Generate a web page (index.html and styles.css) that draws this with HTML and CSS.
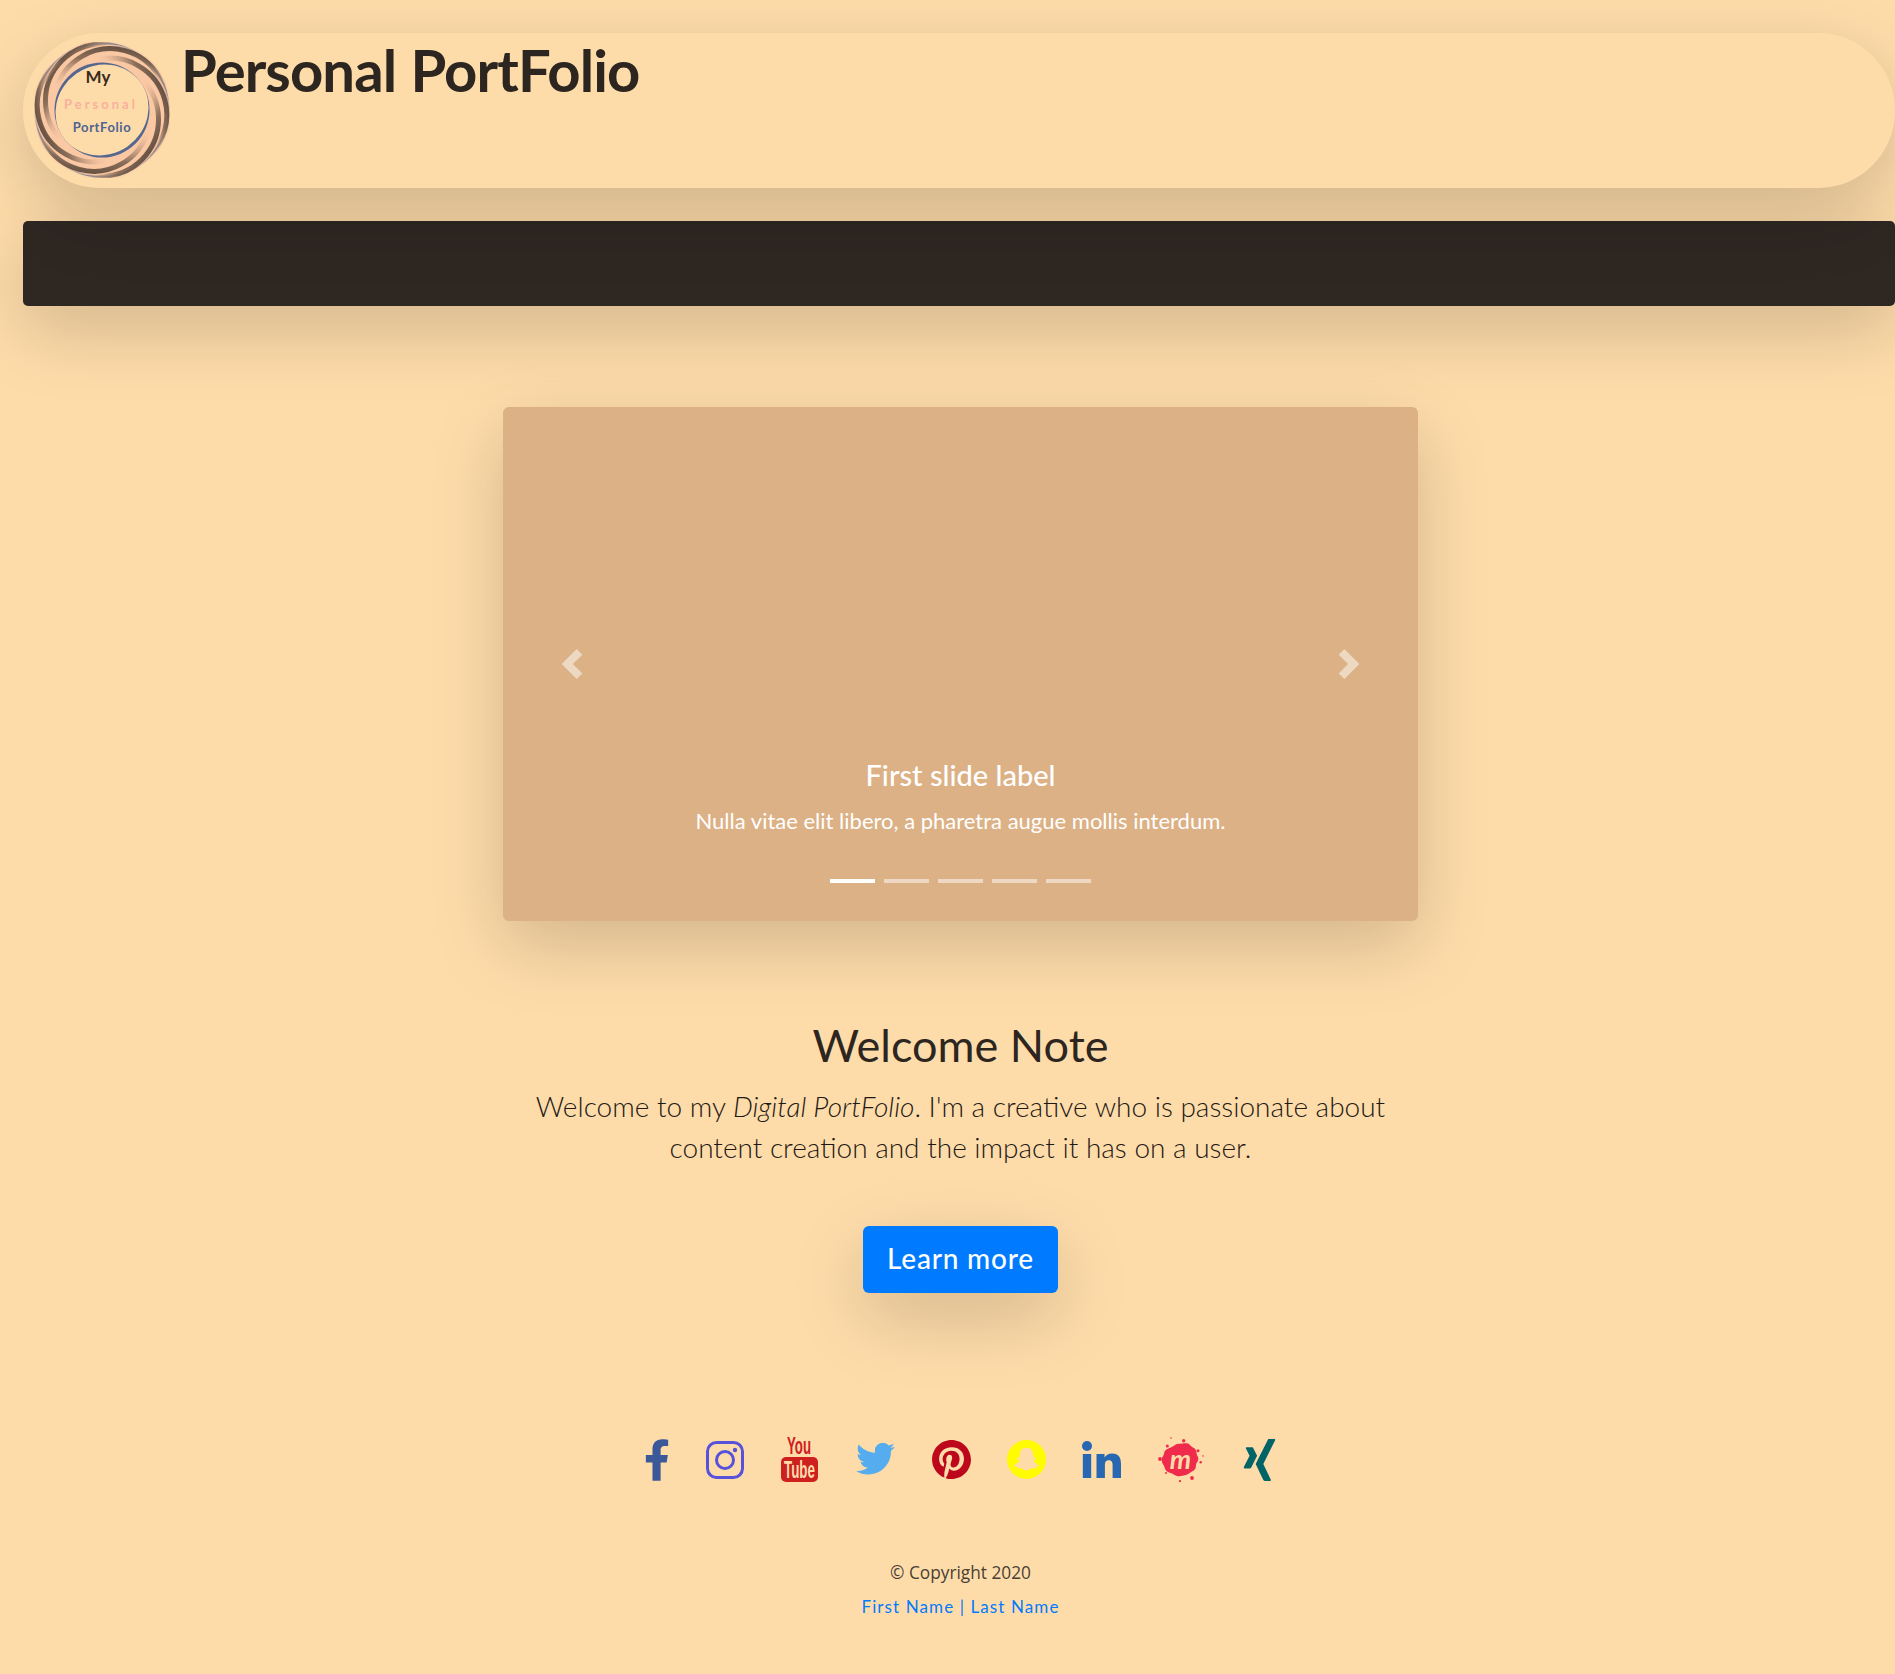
FILE: index.html
```html
<!DOCTYPE html>
<html lang="en">
<head>
<meta charset="utf-8">
<title>Personal PortFolio</title>
<link rel="stylesheet" href="styles.css">
</head>
<body>
<div class="page">
  <header class="masthead">
    <svg class="logo" viewBox="0 0 136 136" width="136" height="136" aria-label="logo">
      <defs>
        <linearGradient id="sh" x1="0" y1="0" x2="1" y2=".7">
          <stop offset="0" stop-color="#2f241c" stop-opacity="1"/>
          <stop offset=".25" stop-color="#6f5847" stop-opacity=".8"/>
          <stop offset=".5" stop-color="#fbc8a4" stop-opacity="0"/>
        </linearGradient>
        <linearGradient id="sh2" x1="0" y1="0" x2="1" y2=".7">
          <stop offset="0" stop-color="#fbc8a4" stop-opacity="1"/>
          <stop offset=".5" stop-color="#fbc8a4" stop-opacity="0"/>
        </linearGradient>
        <circle id="band" cx="68" cy="58.500" r="56.500" fill="none"/>
      </defs>
      <circle cx="68" cy="68" r="66.500" fill="#fbc8a4" stroke="#55678f" stroke-width="1.800"/>
      <g class="blades">
        <g transform="rotate(0 68 68)"><use href="#band" stroke="url(#sh2)" stroke-width="8"/><use href="#band" stroke="url(#sh)" stroke-width="5"/></g>
        <g transform="rotate(60 68 68)"><use href="#band" stroke="url(#sh2)" stroke-width="8"/><use href="#band" stroke="url(#sh)" stroke-width="5"/></g>
        <g transform="rotate(120 68 68)"><use href="#band" stroke="url(#sh2)" stroke-width="8"/><use href="#band" stroke="url(#sh)" stroke-width="5"/></g>
        <g transform="rotate(180 68 68)"><use href="#band" stroke="url(#sh2)" stroke-width="8"/><use href="#band" stroke="url(#sh)" stroke-width="5"/></g>
        <g transform="rotate(240 68 68)"><use href="#band" stroke="url(#sh2)" stroke-width="8"/><use href="#band" stroke="url(#sh)" stroke-width="5"/></g>
        <g transform="rotate(300 68 68)"><use href="#band" stroke="url(#sh2)" stroke-width="8"/><use href="#band" stroke="url(#sh)" stroke-width="5"/></g>
      </g>
      <circle cx="68" cy="68" r="47.500" fill="#55678f"/>
      <ellipse cx="68" cy="68" rx="47.500" ry="44.500" transform="rotate(-35 68 68)" fill="#fedcaa"/>
      <text class="logo-my" x="64" y="41" text-anchor="middle">My</text>
      <text class="logo-pe" x="67" y="67" text-anchor="middle">Personal</text>
      <text class="logo-pf" x="68" y="90" text-anchor="middle">PortFolio</text>
    </svg>
    <h1 class="site-title">Personal PortFolio</h1>
  </header>
  <nav class="navbar"></nav>

  <main class="content">
    <section class="carousel">
      <svg class="chev chev-left" viewBox="0 0 8 8" width="30" height="30"><path d="M5.25 0l-4 4 4 4 1.5-1.5-2.5-2.5 2.5-2.5-1.5-1.5z"/></svg>
      <svg class="chev chev-right" viewBox="0 0 8 8" width="30" height="30"><path d="M2.75 0l-1.5 1.5 2.5 2.5-2.5 2.5 1.5 1.5 4-4-4-4z"/></svg>
      <div class="caption">
        <h5 class="caption-title">First slide label</h5>
        <p class="caption-text">Nulla vitae elit libero, a pharetra augue mollis interdum.</p>
      </div>
      <ol class="indicators">
        <li class="dot dot-active"></li><li class="dot"></li><li class="dot"></li><li class="dot"></li><li class="dot"></li>
      </ol>
    </section>

    <section class="welcome">
      <h2 class="welcome-title">Welcome Note</h2>
      <p class="welcome-text">Welcome to my <em>Digital PortFolio</em>. I'm a creative who is passionate about<br>content creation and the impact it has on a user.</p>
      <a class="btn" href="#">Learn more</a>
    </section>

    <section class="social">
      <svg class="ic ic-fb" viewBox="0 0 320 512" width="26" height="42"><path fill="#3b5998" d="M279.14 288l14.22-92.66h-88.91v-60.13c0-25.35 12.42-50.06 52.24-50.06h40.42V6.26S260.43 0 225.36 0c-73.22 0-121.08 44.38-121.08 124.72v70.62H22.89V288h81.39v224h100.17V288z"/></svg>
      <svg class="ic ic-ig" viewBox="0 0 38 38" width="38" height="38"><g fill="none" stroke="#5851db" stroke-width="3"><rect x="1.500" y="1.500" width="35" height="35" rx="9"/><circle cx="19" cy="19" r="8.500"/></g><circle cx="29" cy="9" r="2.200" fill="#5851db"/></svg>
      <svg class="ic ic-yt" viewBox="0 0 37 45" width="37" height="45">
        <text class="yt-you" x="18" y="17" text-anchor="middle" textLength="24" lengthAdjust="spacingAndGlyphs">You</text>
        <rect x="0" y="20" width="37" height="25" rx="5" fill="#cd201f"/>
        <text class="yt-tube" x="18.500" y="41" text-anchor="middle" textLength="31" lengthAdjust="spacingAndGlyphs">Tube</text>
      </svg>
      <svg class="ic ic-tw" viewBox="0 0 24 20.400" width="39" height="33"><path fill="#55acee" transform="translate(0 -2.300)" d="M23.953 4.57a10 10 0 01-2.825.775 4.958 4.958 0 002.163-2.723c-.951.555-2.005.959-3.127 1.184a4.92 4.92 0 00-8.384 4.482C7.69 8.095 4.067 6.13 1.64 3.162a4.822 4.822 0 00-.666 2.475c0 1.71.87 3.213 2.188 4.096a4.904 4.904 0 01-2.228-.616v.06a4.923 4.923 0 003.946 4.827 4.996 4.996 0 01-2.212.085 4.936 4.936 0 004.604 3.417 9.867 9.867 0 01-6.102 2.105c-.39 0-.779-.023-1.17-.067a13.995 13.995 0 007.557 2.209c9.053 0 13.998-7.496 13.998-13.985 0-.21 0-.42-.015-.63A9.935 9.935 0 0024 4.59z"/></svg>
      <svg class="ic ic-pi" viewBox="0 0 24 24" width="39" height="39"><path fill="#bd081c" d="M12.017 0C5.396 0 .029 5.367.029 11.987c0 5.079 3.158 9.417 7.618 11.162-.105-.949-.199-2.403.041-3.439.219-.937 1.406-5.957 1.406-5.957s-.359-.72-.359-1.781c0-1.663.967-2.911 2.168-2.911 1.024 0 1.518.769 1.518 1.688 0 1.029-.653 2.567-.992 3.992-.285 1.193.6 2.165 1.775 2.165 2.128 0 3.768-2.245 3.768-5.487 0-2.861-2.063-4.869-5.008-4.869-3.41 0-5.409 2.562-5.409 5.199 0 1.033.394 2.143.889 2.741.099.12.112.225.085.345-.09.375-.293 1.199-.334 1.363-.053.225-.172.271-.401.165-1.495-.69-2.433-2.878-2.433-4.646 0-3.776 2.748-7.252 7.92-7.252 4.158 0 7.392 2.967 7.392 6.923 0 4.135-2.607 7.462-6.233 7.462-1.214 0-2.354-.629-2.758-1.379l-.749 2.848c-.269 1.045-1.004 2.352-1.498 3.146 1.123.345 2.306.535 3.55.535 6.607 0 11.985-5.365 11.985-11.987C23.97 5.39 18.592.026 11.985.026L12.017 0z"/></svg>
      <svg class="ic ic-sc" viewBox="0 0 40 40" width="39" height="39"><circle cx="20" cy="20" r="20" fill="#fffc00"/><path fill="#fedcaa" d="M20 8c4.600 0 7 3.400 7 7v3.200l2.400-.4c.8 0 1 .9.3 1.300l-2.400 1.200c.7 2.600 2.600 4.500 5 5.400.6.3.4 1-.2 1.200l-2.600.7-.5 1.700-2.800-.2c-1.900 0-3 2.100-6.200 2.100s-4.300-2.100-6.200-2.100l-2.800.2-.5-1.700-2.600-.7c-.6-.2-.8-.9-.2-1.200 2.400-.9 4.300-2.800 5-5.400l-2.400-1.200c-.7-.4-.5-1.300.3-1.300l2.400.4V15c0-3.600 2.400-7 7-7z"/></svg>
      <svg class="ic ic-li" viewBox="0 0 39 37" width="39" height="37"><g fill="#2867b2"><circle cx="5" cy="5" r="5"/><rect x=".8" y="13" width="8.400" height="24"/><path d="M14.500 13h8v3.400c1.200-2.200 3.900-4 7.500-4 7 0 9 4.500 9 10.600V37h-8.400V24.600c0-3-.6-5.400-3.800-5.400-3.300 0-3.900 2.500-3.900 5.200V37h-8.400z"/></g></svg>
      <svg class="ic ic-me" viewBox="0 0 46 45" width="46" height="45">
        <path fill="#f02a4a" transform="translate(22.300 24.300) scale(1.180 1.060) translate(-24.250 -22.500)" d="M23 6c3 0 4.500-1 7-.5 2.500.6 3 3 5 4 2.300 1.200 3 3.200 3 5.500 0 2 2 3.500 1.500 6-.4 2-2 3-2 5.500s-.8 4.500-3 5.500c-2 1-3 3-5.500 3.500-3 .6-4.500 1.500-7 1-2.500-.6-3.500-2-6-3-2.500-1-4.500-2-5-5-.4-2.500-2.500-4-2.500-7s1.800-4 2-6.500c.2-2.500 2-4 4.500-5C17.500 9.500 20 6 23 6z"/>
        <g fill="#f02a4a"><circle cx="9.300" cy="9" r="1.500"/><circle cx="25.700" cy="3.700" r="1.700"/><circle cx="13" cy="1" r=".8"/><circle cx="40" cy="13.700" r="1.500"/><circle cx="45" cy="19" r=".8"/><circle cx="42.700" cy="25.300" r="1.200"/><circle cx="2" cy="22" r="1.900"/><circle cx="8" cy="36" r="1"/><circle cx="34" cy="41" r="1.900"/><circle cx="22" cy="44" r="1.100"/></g>
        <text class="me-m" x="22.500" y="32" text-anchor="middle">m</text>
      </svg>
      <svg class="ic ic-xi" viewBox="0 0 24 24" width="37" height="42" preserveAspectRatio="none"><path fill="#026466" d="M18.188 0c-.517 0-.741.325-.927.66 0 0-7.455 13.224-7.702 13.657.015.024 4.919 9.023 4.919 9.023.17.308.436.66.967.66h3.454c.211 0 .375-.078.463-.22.089-.151.089-.346-.009-.536l-4.879-8.916c-.004-.006-.004-.016 0-.022L22.139.756c.095-.191.097-.387.006-.535C22.056.078 21.894 0 21.686 0h-3.498zM3.648 4.740c-.211 0-.385.074-.473.216-.09.149-.078.339.02.531l2.340 4.050c.004.01.004.016 0 .021L1.860 16.051c-.099.188-.093.381 0 .529.085.142.239.234.45.234h3.461c.518 0 .766-.348.945-.667l3.734-6.609-2.378-4.155c-.172-.315-.434-.659-.962-.659H3.648v.016z"/></svg>
    </section>

    <footer class="footer">
      <p class="copyright">© Copyright 2020</p>
      <a class="author" href="#">First Name | Last Name</a>
    </footer>
  </main>
</div>
</body>
</html>
```

FILE: styles.css
```css
html, body { margin: 0; padding: 0; overflow-x: hidden; background: #fedcaa; }
body { color: #2d2620; font-family: "Lato", "Open Sans", sans-serif; }
.page { width: 1921px; height: 1674px; overflow: hidden; padding-top: 33px; box-sizing: border-box; }

.masthead {
  position: relative;
  display: flex; align-items: flex-start; gap: 11px;
  margin-left: 23px; width: 1872px; height: 155px; box-sizing: border-box;
  padding: 9px 0 0 11px;
  background: #fedcaa; border-radius: 77px;
  box-shadow: 0 24px 72px rgba(0, 0, 0, .175);
}
.logo { flex: none; }
.site-title { margin: 0; font-size: 58px; line-height: 56px; font-weight: 700; letter-spacing: -0.9px; word-spacing: 1px; }
.logo-my { font: 700 17px "Lato", sans-serif; fill: #3a2a1c; }
.logo-pe { font: 700 13px "Lato", sans-serif; letter-spacing: 3px; fill: #f9b09c; }
.logo-pf { font: 700 13px "Lato", sans-serif; letter-spacing: .6px; fill: #4f6390; }

.navbar {
  margin: 33px 0 0 23px; width: 1872px; height: 85px; background: #2e2722; border-radius: 5px;
  box-shadow: 0 24px 72px rgba(0, 0, 0, .175);
}

.content { display: flex; flex-direction: column; align-items: center; padding-top: 101px; }

.carousel {
  position: relative; width: 915px; height: 514px; background: #dcb186; border-radius: 6px;
  box-shadow: 0 24px 72px rgba(0, 0, 0, .175);
  display: flex; flex-direction: column; align-items: center; justify-content: flex-end;
  color: #fff; text-align: center;
}
.chev { position: absolute; top: 242px; fill: #fff; opacity: .5; }
.chev-left { left: 54px; }
.chev-right { right: 54px; }
.caption { padding-bottom: 42px; }
.caption-title { margin: 0; font-size: 29px; line-height: 34px; font-weight: 500; }
.caption-text { margin: 12px 0 0; font-size: 22px; line-height: 33px; font-weight: 400; }
.indicators { list-style: none; margin: 0 0 38px; padding: 0; display: flex; gap: 9px; }
.dot { width: 45px; height: 4px; background: #fff; opacity: .5; }
.dot-active { opacity: 1; }

.welcome { display: flex; flex-direction: column; align-items: center; margin-top: 98px; text-align: center; }
.welcome-title { margin: 0; font-size: 45px; line-height: 52px; font-weight: 400; }
.welcome-text { margin: 15px 0 0; font-size: 28px; line-height: 41px; font-weight: 300; color: #1f1a15; }
.btn {
  margin-top: 58px; width: 195px; height: 67px; box-sizing: border-box; padding-bottom: 3px; border-radius: 6px; background: #007bff; color: #fff;
  display: flex; align-items: center; justify-content: center;
  font-size: 28px; font-weight: 500; text-decoration: none; letter-spacing: .8px;
  box-shadow: 0 24px 72px rgba(0, 0, 0, .175);
}

.social { display: flex; align-items: center; justify-content: space-between; margin-top: 144px; height: 45px; width: 634px; }
.ic { flex: none; display: block; }
.ic-yt { overflow: visible; }
.ic-tw, .ic-pi, .ic-sc { margin-left: 1px; margin-right: -1px; }
.yt-you { font: 700 24px "Liberation Sans Narrow", "Liberation Sans", sans-serif; fill: #cd201f; }
.yt-tube { font: 700 24px "Liberation Sans Narrow", "Liberation Sans", sans-serif; fill: #fedcaa; }
.me-m { font: italic 700 27px "Lato", sans-serif; fill: #fedcaa; }

.footer { margin-top: 78px; text-align: center; }
.copyright { margin: 0; font-family: "Open Sans", sans-serif; font-size: 17.3px; line-height: 26px; color: #4a3f34; }
.author { display: block; margin-top: 8px; color: #007bff; font-size: 17px; line-height: 26px; text-decoration: none; letter-spacing: 1.1px; }
```
